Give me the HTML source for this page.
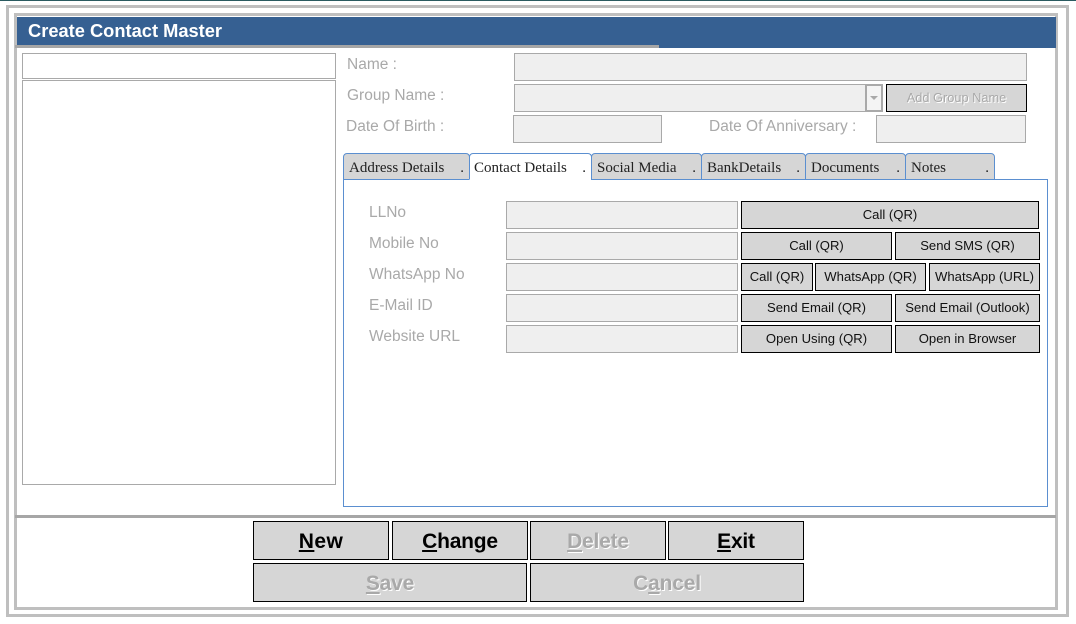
<!DOCTYPE html>
<html><head><meta charset="utf-8"><style>
html,body{margin:0;padding:0;width:1076px;height:624px;background:#fff;overflow:hidden}
body{position:relative;font-family:"Liberation Sans",sans-serif}
div{position:absolute;box-sizing:border-box}
.s{background:#a6a6a6}
.i{background:#efefef;border:1px solid #a9a9a9}
.w{background:#fff;border:1px solid #a9a9a9}
.l{color:#a9a9a9;font-size:15.5px;line-height:20px;white-space:nowrap;margin-top:2px}
.b{background:#d6d6d6;border:1px solid #000;color:#111;font-size:13.1px;text-align:center;line-height:26px;white-space:nowrap}
.t{background:#d6d6d6;border:1px solid #5b8fd0;border-radius:4px 4px 0 0;font-family:"Liberation Serif",serif;font-size:15px;line-height:28px;color:#222;top:153px;height:27px;white-space:nowrap;padding-left:5px}
.t span{position:absolute;right:5px;top:0}
.m{background:#d6d6d6;border:1px solid #000;font-weight:bold;font-size:21px;text-align:center;line-height:40px;color:#000;white-space:nowrap;letter-spacing:-.2px}
.d{color:#a9a9a9;text-shadow:1px 1px 0 #fff}
</style></head><body>
<div style="left:0;top:0;width:1076px;height:1px;background:#2a5a60"></div>
<div style="left:6px;top:5px;width:1063px;height:612px;border:3px solid #bfbfbf"></div>
<div style="left:14px;top:13px;width:1044px;height:597px;border:3px solid #bfbfbf"></div>
<div style="left:17px;top:17px;width:1039px;height:31px;background:#366092"></div>
<div style="left:28px;top:18px;color:#fff;font-weight:bold;font-size:18.3px;line-height:26px;white-space:nowrap">Create Contact Master</div>
<div class="s" style="left:15px;top:45px;width:644px;height:3px"></div>
<div class="w" style="left:22px;top:53px;width:314px;height:26px"></div>
<div class="w" style="left:22px;top:80px;width:314px;height:405px"></div>

<div class="l" style="left:347px;top:53px">Name :</div>
<div class="l" style="left:347px;top:84px">Group Name :</div>
<div class="l" style="left:346px;top:115px">Date Of Birth :</div>
<div class="l" style="left:709px;top:115px">Date Of Anniversary :</div>
<div class="i" style="left:514px;top:53px;width:513px;height:28px"></div>
<div class="i" style="left:514px;top:84px;width:369px;height:28px"></div>
<div style="left:865px;top:84px;width:18px;height:28px;background:#f4f4f4;border:2px solid #a9a9a9"></div>
<div style="left:870px;top:96px;width:0;height:0;border-left:4px solid transparent;border-right:4px solid transparent;border-top:4px solid #a9a9a9"></div>
<div class="b d" style="left:886px;top:84px;width:141px;height:28px;font-size:12.8px;line-height:26px">Add Group Name</div>
<div class="i" style="left:513px;top:115px;width:149px;height:28px"></div>
<div class="i" style="left:876px;top:115px;width:150px;height:28px"></div>

<div style="left:343px;top:179px;width:705px;height:328px;border:1px solid #5b8fd0;background:#fff"></div>
<div class="t" style="left:343px;width:127px">Address Details<span>.</span></div>
<div class="t" style="left:469px;width:123px;background:#fff;border-bottom-color:#fff;padding-left:4px">Contact Details<span>.</span></div>
<div class="t" style="left:591px;width:111px">Social Media<span>.</span></div>
<div class="t" style="left:701px;width:105px">BankDetails<span>.</span></div>
<div class="t" style="left:805px;width:101px">Documents<span>.</span></div>
<div class="t" style="left:905px;width:90px">Notes<span>.</span></div>

<div class="l" style="left:369px;top:201px">LLNo</div>
<div class="l" style="left:369px;top:232px">Mobile No</div>
<div class="l" style="left:369px;top:263px">WhatsApp No</div>
<div class="l" style="left:369px;top:294px">E-Mail ID</div>
<div class="l" style="left:369px;top:325px">Website URL</div>
<div class="i" style="left:506px;top:201px;width:232px;height:28px"></div>
<div class="i" style="left:506px;top:232px;width:232px;height:28px"></div>
<div class="i" style="left:506px;top:263px;width:232px;height:28px"></div>
<div class="i" style="left:506px;top:294px;width:232px;height:28px"></div>
<div class="i" style="left:506px;top:325px;width:232px;height:28px"></div>

<div class="b" style="left:741px;top:201px;width:298px;height:28px">Call (QR)</div>
<div class="b" style="left:741px;top:232px;width:151px;height:28px">Call (QR)</div>
<div class="b" style="left:895px;top:232px;width:145px;height:28px">Send SMS (QR)</div>
<div class="b" style="left:741px;top:263px;width:72px;height:28px">Call (QR)</div>
<div class="b" style="left:815px;top:263px;width:111px;height:28px">WhatsApp (QR)</div>
<div class="b" style="left:929px;top:263px;width:111px;height:28px">WhatsApp (URL)</div>
<div class="b" style="left:741px;top:294px;width:151px;height:28px">Send Email (QR)</div>
<div class="b" style="left:895px;top:294px;width:145px;height:28px">Send Email (Outlook)</div>
<div class="b" style="left:741px;top:325px;width:151px;height:28px">Open Using (QR)</div>
<div class="b" style="left:895px;top:325px;width:145px;height:28px">Open in Browser</div>

<div class="s" style="left:15px;top:515px;width:1041px;height:3px"></div>
<div class="m" style="left:253px;top:521px;width:136px;height:39px;letter-spacing:.4px"><u>N</u>ew</div>
<div class="m" style="left:392px;top:521px;width:136px;height:39px"><u>C</u>hange</div>
<div class="m d" style="left:530px;top:521px;width:136px;height:39px"><u>D</u>elete</div>
<div class="m" style="left:668px;top:521px;width:136px;height:39px"><u>E</u>xit</div>
<div class="m d" style="left:253px;top:563px;width:274px;height:39px"><u>S</u>ave</div>
<div class="m d" style="left:530px;top:563px;width:274px;height:39px">C<u>a</u>ncel</div>
</body></html>
